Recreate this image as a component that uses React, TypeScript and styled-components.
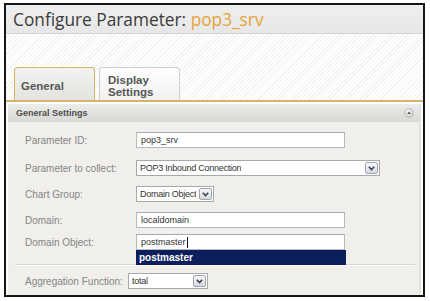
import React from 'react';
import styled, { createGlobalStyle } from 'styled-components';

const Global = createGlobalStyle`
  html, body { margin: 0; padding: 0; background: #fff; }
  body {
    width: 430px; height: 301px; overflow: hidden;
    font-family: "Liberation Sans", Arial, sans-serif;
  }
`;

const Page = styled.div`
  width: 430px;
  height: 301px;
  box-sizing: border-box;
  padding: 3px 5px 0 4px;
  background: #fff;
`;

const Frame = styled.div`
  width: 421px;
  height: 294px;
  box-sizing: border-box;
  border: 2px solid #151515;
  background: #fff;
  display: flex;
  flex-direction: column;
  overflow: hidden;
`;

const TitleBar = styled.div`
  height: 28px;
  flex: none;
  display: flex;
  align-items: center;
  padding-left: 7px;
  background: linear-gradient(#efefef, #e7e7e7);
  border-bottom: 1px solid #d3d3d3;
  font-family: "Open Sans", "Liberation Sans", sans-serif;
  font-size: 17.3px;
  color: #3b3b3b;
  white-space: nowrap;
`;

const TitleAccent = styled.span`
  color: #e5a43c;
`;

const Hatch = styled.div`
  height: 66px;
  flex: none;
  box-sizing: border-box;
  display: flex;
  align-items: flex-end;
  gap: 4px;
  padding-left: 8px;
  background: repeating-linear-gradient(135deg, #ffffff 0 2px, #f1f1f1 2px 3px);
`;

const Tab = styled.div<{ $active?: boolean }>`
  width: 81px;
  height: 33px;
  box-sizing: border-box;
  display: flex;
  align-items: center;
  padding: 3px 0 0 ${p => (p.$active ? 6 : 8)}px;
  border: 1px solid ${p => (p.$active ? '#d4b26a' : '#cdcdcd')};
  border-bottom: none;
  border-radius: 4px 4px 0 0;
  background: ${p =>
    p.$active
      ? 'linear-gradient(#f3f3f1, #e3e3e0)'
      : 'linear-gradient(#ffffff, #f1f1f1)'};
  font-size: 11.5px;
  font-weight: bold;
  color: #565656;
  line-height: 12px;
`;

const AccentLine = styled.div`
  height: 2px;
  flex: none;
  background: #d6b46c;
  margin-bottom: 2px;
`;

const SectionBar = styled.div`
  height: 18px;
  flex: none;
  margin: 0 2px 0 2px;
  display: flex;
  align-items: center;
  justify-content: space-between;
  padding: 0 5px 0 8px;
  background: linear-gradient(#ededeb, #d8d8d4);
  font-size: 9px;
  font-weight: bold;
  color: #4d4d4d;
  border-right: 2px solid #e2e2de;
`;

const Body = styled.div`
  flex: 1;
  margin: 0 2px 0 2px;
  padding: 10px 0 0 17px;
  background: #f0efeb;
  border-right: 2px solid #e2e2de;
  display: flex;
  flex-direction: column;
`;

const Row = styled.div<{ $gap: number }>`
  display: flex;
  align-items: center;
  height: 16px;
  margin-top: ${p => p.$gap}px;
`;

const Label = styled.div<{ $w?: number }>`
  width: ${p => p.$w ?? 111}px;
  flex: none;
  font-size: 10px;
  color: #858585;
  white-space: nowrap;
`;

const Field = styled.div`
  position: relative;
  width: 209px;
  height: 16px;
  box-sizing: border-box;
  border: 1px solid #b9b9b9;
  border-top-color: #a9a9a9;
  background: #fff;
  padding-left: 4px;
  font-size: 9px;
  line-height: 14px;
  color: #333;
  display: flex;
  align-items: center;
`;

const Caret = styled.span`
  display: inline-block;
  width: 1px;
  height: 11px;
  background: #111;
  margin-left: 1px;
`;

const Suggest = styled.div`
  position: absolute;
  left: -1px;
  top: 15px;
  width: 210px;
  height: 15px;
  box-sizing: border-box;
  padding-left: 3px;
  background: #0c1f5c;
  color: #fff;
  font-size: 10px;
  font-weight: bold;
  line-height: 15px;
  z-index: 2;
`;

const Select = styled.div<{ $w: number }>`
  width: ${p => p.$w}px;
  height: 16px;
  box-sizing: border-box;
  border: 1px solid #a8a8a8;
  background: #fff;
  display: flex;
  align-items: center;
  justify-content: space-between;
  padding: 0 1px 0 3px;
  font-size: 9px;
  color: #333;
  white-space: nowrap;
`;

const SelectText = styled.span`
  letter-spacing: -0.25px;
  overflow: hidden;
`;

const ArrowBtn = styled.div`
  width: 13px;
  height: 12px;
  flex: none;
  margin-left: 2px;
  box-sizing: border-box;
  border: 1px solid #9ea6b2;
  border-radius: 2px;
  background: linear-gradient(#f7f7f7, #d5d9e0);
  display: flex;
  align-items: center;
  justify-content: center;
`;

const Separator = styled.div`
  height: 1px;
  margin: 14px 4px 0 -10px;
  background: #d6d6d1;
  box-shadow: 0 1px 0 #fbfbf9;
`;

const Chevron = () => (
  <svg width="7" height="5" viewBox="0 0 7 5">
    <path d="M0.8 0.8 L3.5 3.6 L6.2 0.8" fill="none" stroke="#3b4150" strokeWidth="1.6" />
  </svg>
);

const CollapseIcon = () => (
  <svg width="10" height="10" viewBox="0 0 10 10">
    <defs>
      <radialGradient id="cg" cx="0.4" cy="0.35" r="0.7">
        <stop offset="0" stopColor="#ffffff" />
        <stop offset="1" stopColor="#c9c9c9" />
      </radialGradient>
    </defs>
    <circle cx="5" cy="5" r="4.3" fill="url(#cg)" stroke="#b0b0b0" strokeWidth="0.8" />
    <path d="M3 6 L5 3.6 L7 6 Z" fill="#555" />
  </svg>
);

const SelectBox: React.FC<{ w: number; value: string }> = ({ w, value }) => (
  <Select $w={w}>
    <SelectText>{value}</SelectText>
    <ArrowBtn>
      <Chevron />
    </ArrowBtn>
  </Select>
);

export default function App() {
  return (
    <Page>
      <Global />
      <Frame>
        <TitleBar>
          Configure Parameter:&nbsp;<TitleAccent>pop3_srv</TitleAccent>
        </TitleBar>
        <Hatch>
          <Tab $active>General</Tab>
          <Tab>
            Display
            <br />
            Settings
          </Tab>
        </Hatch>
        <AccentLine />
        <SectionBar>
          <span>General Settings</span>
          <CollapseIcon />
        </SectionBar>
        <Body>
          <Row $gap={0}>
            <Label>Parameter ID:</Label>
            <Field>pop3_srv</Field>
          </Row>
          <Row $gap={12}>
            <Label>Parameter to collect:</Label>
            <SelectBox w={244} value="POP3 Inbound Connection" />
          </Row>
          <Row $gap={10}>
            <Label>Chart Group:</Label>
            <SelectBox w={78} value="Domain Object" />
          </Row>
          <Row $gap={10}>
            <Label>Domain:</Label>
            <Field>localdomain</Field>
          </Row>
          <Row $gap={6}>
            <Label>Domain Object:</Label>
            <Field>
              postmaster
              <Caret />
              <Suggest>postmaster</Suggest>
            </Field>
          </Row>
          <Separator />
          <Row $gap={8}>
            <Label $w={103}>Aggregation Function:</Label>
            <SelectBox w={80} value="total" />
          </Row>
        </Body>
      </Frame>
    </Page>
  );
}
